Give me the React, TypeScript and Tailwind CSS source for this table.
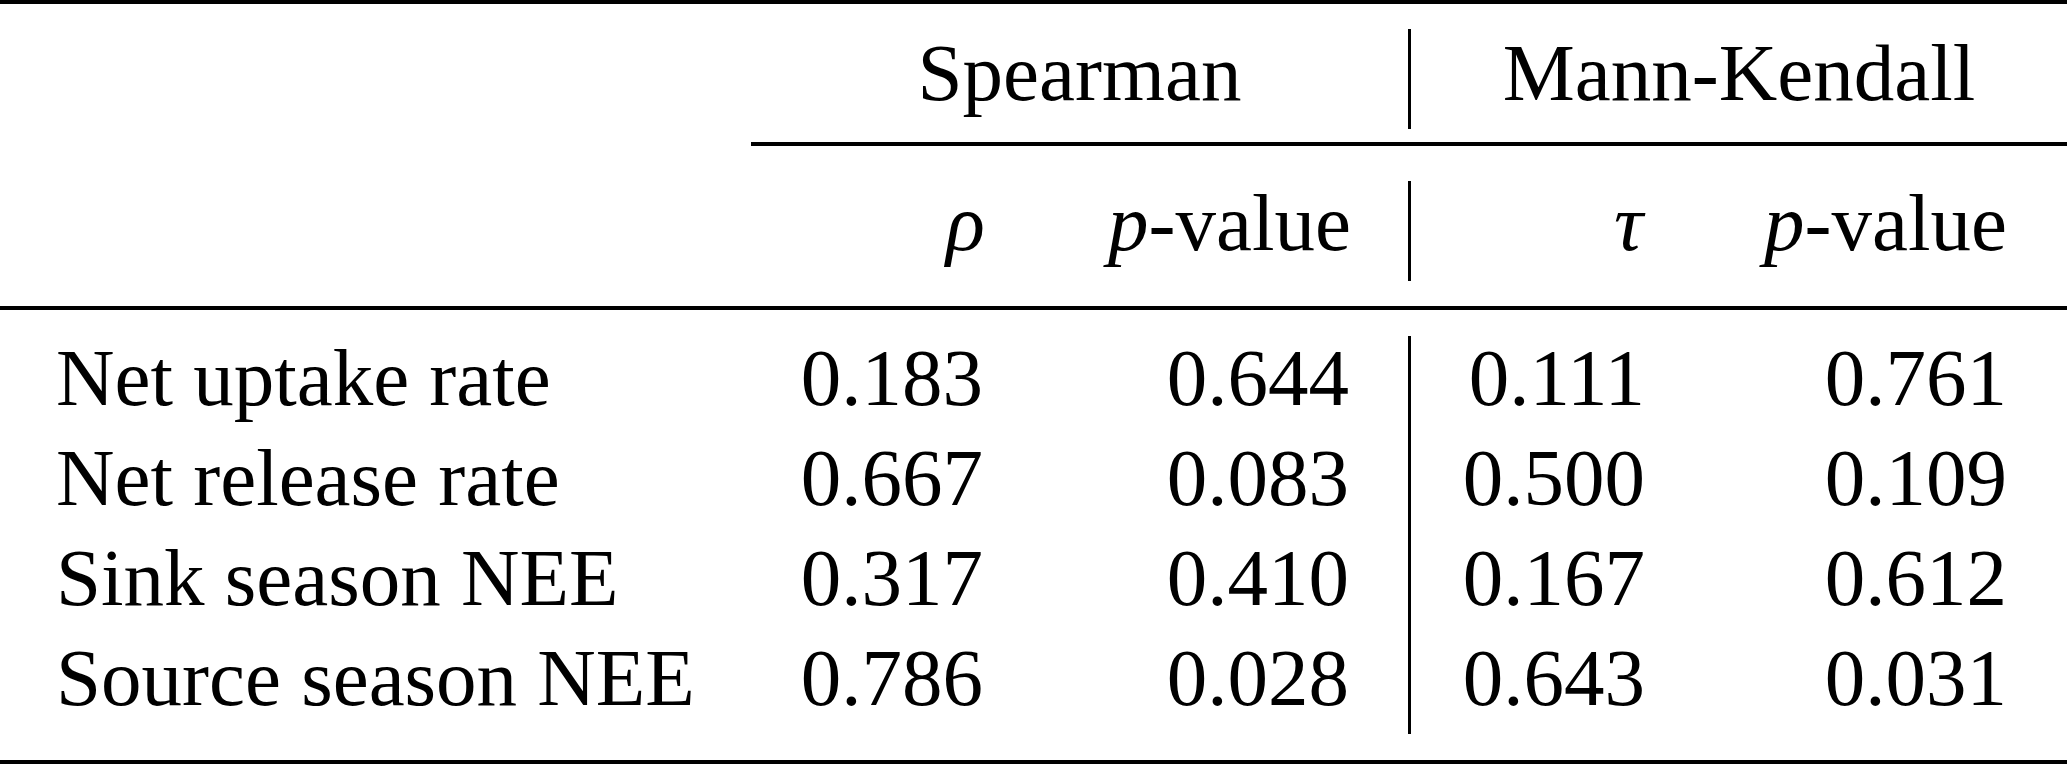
const rows = [
  { label: "Net uptake rate", rho: "0.183", p1: "0.644", tau: "0.111", p2: "0.761" },
  { label: "Net release rate", rho: "0.667", p1: "0.083", tau: "0.500", p2: "0.109" },
  { label: "Sink season NEE", rho: "0.317", p1: "0.410", tau: "0.167", p2: "0.612" },
  { label: "Source season NEE", rho: "0.786", p1: "0.028", tau: "0.643", p2: "0.031" },
];

function PValue() {
  return (
    <span>
      <span className="italic">p</span>-value
    </span>
  );
}

export default function App() {
  return (
    <div className="w-[2067px] h-[764px] bg-white text-black font-['Liberation_Serif'] text-[81px] leading-[100px] flex flex-col">
      {/* top rule */}
      <div className="h-[4px] bg-black" />

      {/* group headers */}
      <div className="h-[138px] flex items-start">
        <div className="w-[751px]" />
        <div className="w-[657px] pt-[19px] text-center">Spearman</div>
        <div className="w-[3px] h-[100px] mt-[25px] bg-black" />
        <div className="w-[656px] pt-[19px] text-center">Mann-Kendall</div>
      </div>

      {/* cmidrule */}
      <div className="h-[4px] ml-[751px] bg-black" />

      {/* sub headers */}
      <div className="h-[160px] flex items-start">
        <div className="w-[751px]" />
        <div className="w-[234px] pt-[27px] text-right italic">ρ</div>
        <div className="w-[366px] pt-[27px] text-right">
          <PValue />
        </div>
        <div className="w-[57px]" />
        <div className="w-[3px] h-[100px] mt-[35px] bg-black" />
        <div className="w-[232px] pt-[27px] text-right italic">τ</div>
        <div className="w-[364px] pt-[27px] text-right">
          <PValue />
        </div>
      </div>

      {/* midrule */}
      <div className="h-[4px] bg-black" />

      {/* body */}
      <div className="h-[450px] flex items-start">
        <div className="w-[751px] pl-[56px] pt-[18px] flex flex-col">
          {rows.map((r) => (
            <div key={r.label}>{r.label}</div>
          ))}
        </div>
        <div className="w-[232px] pt-[18px] flex flex-col text-right">
          {rows.map((r) => (
            <div key={r.label}>{r.rho}</div>
          ))}
        </div>
        <div className="w-[366px] pt-[18px] flex flex-col text-right">
          {rows.map((r) => (
            <div key={r.label}>{r.p1}</div>
          ))}
        </div>
        <div className="w-[59px]" />
        <div className="w-[3px] h-[398px] mt-[26px] bg-black" />
        <div className="w-[234px] pt-[18px] flex flex-col text-right">
          {rows.map((r) => (
            <div key={r.label}>{r.tau}</div>
          ))}
        </div>
        <div className="w-[362px] pt-[18px] flex flex-col text-right">
          {rows.map((r) => (
            <div key={r.label}>{r.p2}</div>
          ))}
        </div>
      </div>

      {/* bottom rule */}
      <div className="h-[4px] bg-black" />
    </div>
  );
}
